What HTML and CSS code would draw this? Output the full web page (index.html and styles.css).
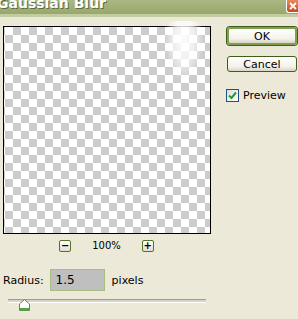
FILE: index.html
```html
<!DOCTYPE html>
<html lang="en">
<head>
  <meta charset="UTF-8">
  <title>Gaussian Blur</title>
  <link rel="stylesheet" href="styles.css">
</head>
<body>
  <div class="window">
    <div class="titlebar">
      <span class="title">Gaussian Blur</span>
      <span class="close">
        <svg width="11" height="12" viewBox="0 0 11 12"><path d="M3 3 L9 9 M9 3 L3 9" stroke="#fff" stroke-width="1.8"/></svg>
      </span>
    </div>

    <div class="content">
      <div class="left">
        <div class="preview"><div class="glow"></div></div>

        <div class="zoomrow">
          <span class="mini">&minus;</span>
          <span class="pct">100%</span>
          <span class="mini">+</span>
        </div>

        <div class="radius">
          <span class="label">Radius:</span>
          <span class="field">1.5</span>
          <span class="label unit">pixels</span>
        </div>

        <div class="slider">
          <div class="track"></div>
          <svg class="thumb" width="11" height="12" viewBox="0 0 11 12">
            <path d="M0.5 5 L5.5 0.5 L10.5 5 L10.5 11.5 L0.5 11.5 Z" fill="#fff" stroke="#7a7a6a"/>
            <rect x="1" y="9" width="9" height="2.5" fill="#4fa83c"/>
          </svg>
        </div>
      </div>

      <div class="right">
        <button class="btn default">OK</button>
        <button class="btn">Cancel</button>
        <label class="check">
          <span class="box">
            <svg width="9" height="9" viewBox="0 0 9 9"><path d="M1 4.5 L3.5 7 L8 1.5" fill="none" stroke="#21a121" stroke-width="2"/></svg>
          </span>
          Preview
        </label>
      </div>
    </div>
  </div>
</body>
</html>
```

FILE: styles.css
```css
body { margin: 0; font-family: "DejaVu Sans", Tahoma, sans-serif; font-size: 11px; color: #000; }

.window {
  width: 298px;
  height: 319px;
  background: #ece9d8;
  overflow: hidden;
}

.titlebar {
  height: 14px;
  display: flex;
  justify-content: space-between;
  background: linear-gradient(#aab884, #98a86c);
  border-bottom: 3px solid #c3cca0;
}
.title {
  margin: -5px 0 0 -3px;
  color: #fff;
  font-family: "DejaVu Sans", sans-serif;
  font-weight: bold;
  font-size: 14px;
  text-shadow: 1px 1px 0 #5f6b3c;
}
.close {
  width: 11px;
  height: 12px;
  background: linear-gradient(#e98a5c, #c84a1c);
  border: 1px solid #fff;
  border-right: 0;
  border-top: 0;
  border-radius: 0 0 0 3px;
}
.close svg { display: block; }

.content { display: flex; padding: 9px 0 0 3px; }

.preview {
  position: relative;
  width: 206px;
  height: 206px;
  border: 1px solid #000;
  background-color: #fff;
  background-image:
    conic-gradient(#cccccc 25%, #fff 0 50%, #cccccc 0 75%, #fff 0);
  background-size: 16px 16px;
  background-position: 1px 0;
}
.glow {
  position: absolute;
  left: 160px;
  top: -6px;
  width: 40px;
  height: 60px;
  background: radial-gradient(ellipse at 50% 30%, rgba(255,255,255,0.95) 0, rgba(255,255,255,0.7) 35%, rgba(255,255,255,0) 70%);
}

.zoomrow {
  display: flex;
  align-items: center;
  justify-content: center;
  gap: 21px;
  margin-top: 5px;
  padding-right: 1px;
  height: 13px;
}
.mini {
  width: 10px;
  height: 10px;
  border: 1px solid #56702a;
  border-radius: 2px;
  background: linear-gradient(#fff, #e2dfcc);
  font-size: 10px;
  line-height: 9px;
  text-align: center;
  font-weight: bold;
}
.pct { font-size: 10px; }

.radius {
  display: flex;
  align-items: center;
  margin-top: 17px;
}
.field {
  width: 48px;
  height: 20px;
  margin-left: 6px;
  padding-left: 5px;
  background: #bfbfbf;
  border: 1px solid #a7bd82;
  line-height: 20px;
  font-size: 12px;
}
.unit { margin-left: 7px; }

.slider {
  position: relative;
  height: 14px;
  margin: 8px 0 0 5px;
  width: 198px;
}
.track {
  margin-top: 5px;
  height: 2px;
  border-top: 1px solid #9d9d92;
  border-bottom: 1px solid #fff;
  background: #d8d5c4;
}
.thumb {
  position: absolute;
  left: 11px;
  top: 0;
}

.right {
  display: flex;
  flex-direction: column;
  margin-left: 16px;
  padding-top: 1px;
}
.btn {
  width: 70px;
  height: 16px;
  padding: 0;
  margin-bottom: 12px;
  font-family: inherit;
  font-size: 11px;
  border: 1px solid #3f5d1e;
  border-radius: 3px;
  background: linear-gradient(#fff, #f2f1ea 70%, #d8d5c4);
}
.btn.default {
  height: 18px;
  border: 2px solid #7ea04c;
  box-shadow: 0 0 0 1px #3f5d1e;
  margin-bottom: 11px;
}
.check {
  display: flex;
  align-items: center;
  gap: 4px;
  margin-top: 5px;
  margin-left: -1px;
}
.box {
  width: 11px;
  height: 11px;
  border: 1px solid #1c5180;
  background: linear-gradient(135deg, #dcdcd7, #fff);
  display: flex;
  align-items: center;
  justify-content: center;
}
```
